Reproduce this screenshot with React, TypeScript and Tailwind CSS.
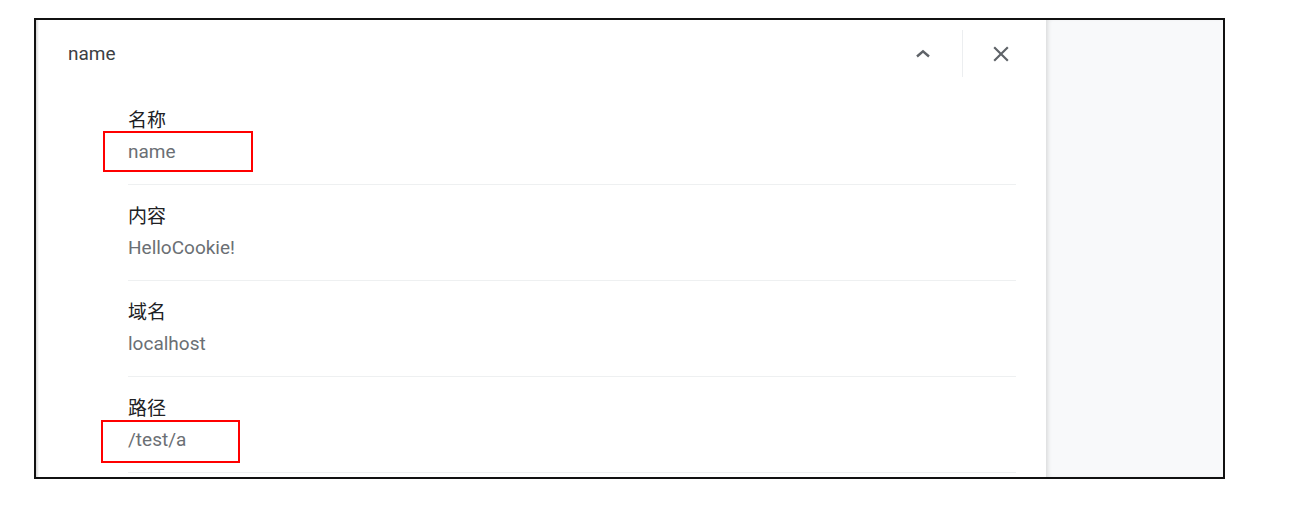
const rows = [
  { label: "名称", value: "name" },
  { label: "内容", value: "HelloCookie!" },
  { label: "域名", value: "localhost" },
  { label: "路径", value: "/test/a" },
];

export default function App() {
  return (
    <div className="h-[505px] w-[1307px] bg-white pl-[34px] pt-[18px] font-['Roboto','Noto_Sans_CJK_SC',sans-serif]">
      <div className="flex h-[461px] w-[1191px] overflow-hidden border-2 border-[#111]">
        <div className="w-[3px] shrink-0 bg-gradient-to-r from-[#d4d4d4] to-white" />
        <div className="relative flex w-[1007px] shrink-0 flex-col bg-white">
          <div className="mt-[10px] flex h-[47px] items-center pl-[29px] pr-[21px]">
            <span className="flex-1 text-[19px] leading-[22px] text-[#3c4043]">name</span>
            <button className="flex h-[40px] w-[48px] items-center justify-center text-[#5f6368]">
              <svg viewBox="0 0 24 24" className="h-6 w-6" fill="none" stroke="currentColor" strokeWidth="2.4">
                <path d="M6 14.5l6-5.2 6 5.2" />
              </svg>
            </button>
            <div className="ml-[15px] mr-[14px] h-[47px] w-px bg-[#eceef0]" />
            <button className="flex h-[40px] w-[48px] items-center justify-center text-[#5f6368]">
              <svg viewBox="0 0 24 24" className="h-[26px] w-[26px]" fill="currentColor">
                <path d="M19 6.41L17.59 5 12 10.59 6.41 5 5 6.41 10.59 12 5 17.59 6.41 19 12 13.41 17.59 19 19 17.59 13.41 12z" />
              </svg>
            </button>
          </div>
          <div className="mt-[12px] flex flex-col">
            {rows.map((row, i) => (
              <div
                key={row.label}
                className="relative ml-[89px] mr-[30px] h-[96px] border-b border-[#eef0f1] pt-[21px]"
              >
                <div className="text-[19px] leading-[22px] text-[#202124]">{row.label}</div>
                <div className="mt-[9px] text-[19px] leading-[22px] text-[#6b6f74]">{row.value}</div>
                {i === 0 && (
                  <div className="absolute left-[-25px] top-[42px] h-[41px] w-[150px] border-2 border-[#ff0000]" />
                )}
                {i === 3 && (
                  <div className="absolute left-[-27px] top-[43px] h-[43px] w-[139px] border-2 border-[#ff0000]" />
                )}
              </div>
            ))}
          </div>
        </div>
        <div className="flex-1 bg-[#f8f9fa] shadow-[inset_4px_0_4px_-2px_rgba(0,0,0,0.12)]" />
      </div>
    </div>
  );
}
